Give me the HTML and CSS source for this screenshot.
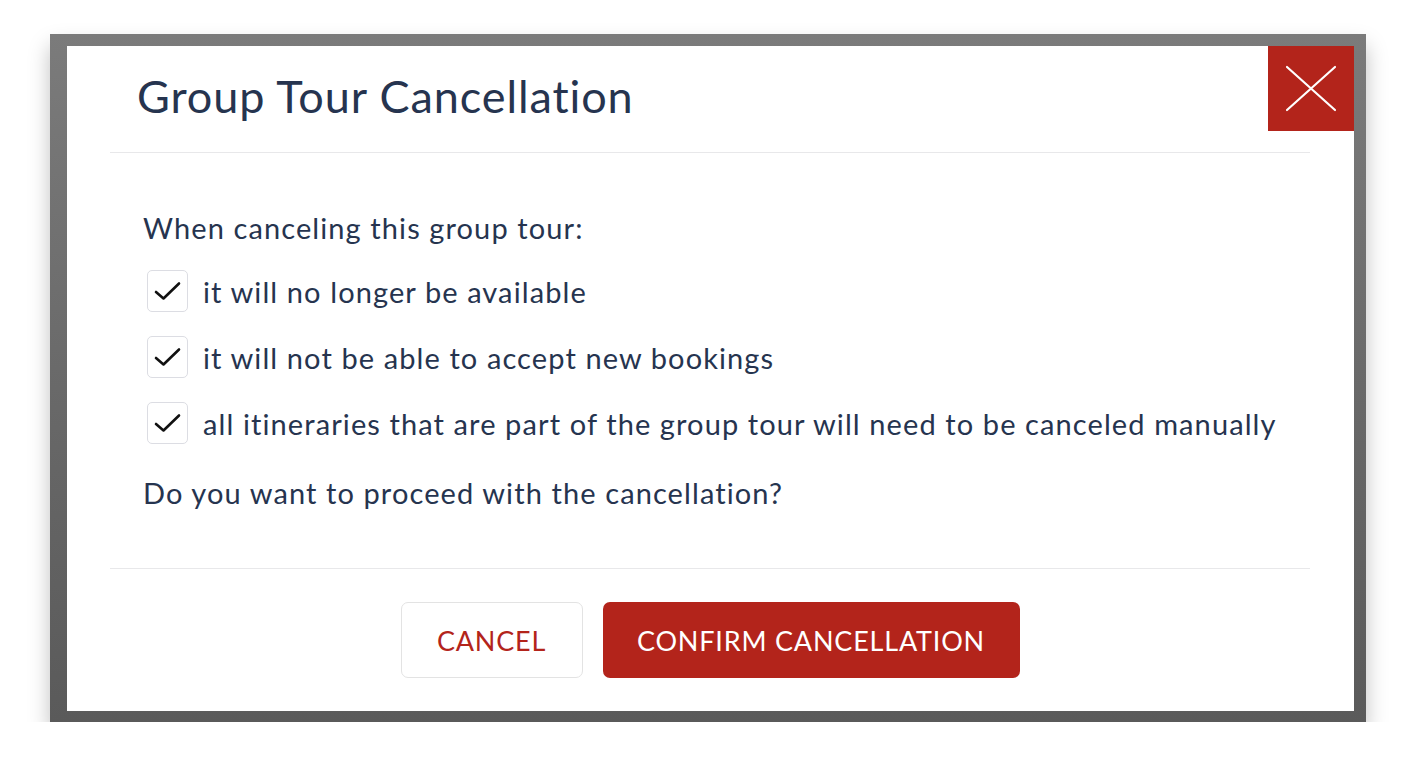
FILE: index.html
```html
<!DOCTYPE html>
<html lang="en">
<head>
    <meta charset="UTF-8">
    <meta name="viewport" content="width=device-width, initial-scale=1.0">
    <title>Group Tour Cancellation</title>
    <link rel="stylesheet" href="styles.css">
</head>
<body>
    <div class="frame">
        <div class="modal">
            <div class="modal-header">
                <h1>Group Tour Cancellation</h1>
                <button class="close-btn" type="button" aria-label="Close">
                    <svg viewBox="0 0 86 85" width="86" height="85">
                        <path d="M19 21 L67 64 M67 21 L19 64" stroke="#fff" stroke-width="2.2" stroke-linecap="round" fill="none"/>
                    </svg>
                </button>
            </div>
            <div class="modal-body">
                <p class="intro">When canceling this group tour:</p>
                <ul class="checklist">
                    <li>
                        <span class="check">
                            <svg viewBox="0 0 42 42" width="42" height="42"><path d="M9 22 L16.5 28.5 L32 13.5" stroke="#111" stroke-width="2.6" fill="none" stroke-linecap="round" stroke-linejoin="round"/></svg>
                        </span>
                        it will no longer be available
                    </li>
                    <li>
                        <span class="check">
                            <svg viewBox="0 0 42 42" width="42" height="42"><path d="M9 22 L16.5 28.5 L32 13.5" stroke="#111" stroke-width="2.6" fill="none" stroke-linecap="round" stroke-linejoin="round"/></svg>
                        </span>
                        it will not be able to accept new bookings
                    </li>
                    <li>
                        <span class="check">
                            <svg viewBox="0 0 42 42" width="42" height="42"><path d="M9 22 L16.5 28.5 L32 13.5" stroke="#111" stroke-width="2.6" fill="none" stroke-linecap="round" stroke-linejoin="round"/></svg>
                        </span>
                        all itineraries that are part of the group tour will need to be canceled manually
                    </li>
                </ul>
                <p class="outro">Do you want to proceed with the cancellation?</p>
            </div>
            <div class="modal-footer">
                <button type="button" class="btn btn-cancel">CANCEL</button>
                <button type="button" class="btn btn-confirm">CONFIRM CANCELLATION</button>
            </div>
        </div>
    </div>
</body>
</html>
```

FILE: styles.css
```css
:root {
    --font-body: 'Lato', 'Open Sans', sans-serif;
    --color-text: #26344f;
    --color-red: #b3241b;
    --color-line: #e8e8ea;
}

html, body {
    margin: 0;
    background: #fff;
}

body {
    font-family: var(--font-body);
    font-variant-ligatures: none;
    color: var(--color-text);
    padding: 34px 0 0 50px;
}

/* grey window frame around the dialog */
.frame {
    width: 1316px;
    box-sizing: border-box;
    padding: 12px 12px 11px 17px;
    background: linear-gradient(180deg, #7b7b7b 0%, #666 60%, #5a5a5a 100%);
    box-shadow: 0 12px 20px rgba(0, 0, 0, 0.25);
}

.modal {
    background: #fff;
    display: flex;
    flex-direction: column;
}

.modal-header {
    display: flex;
    justify-content: space-between;
    align-items: flex-start;
    height: 106px;
    margin: 0 44px 0 43px;
    border-bottom: 1px solid var(--color-line);
}
h1 {
    margin: 0;
    padding: 23px 0 0 27px;
    font-size: 45px;
    font-weight: 400;
    letter-spacing: 0.9px;
    line-height: 54px;
}
.close-btn {
    width: 86px;
    height: 85px;
    margin-right: -44px;
    padding: 0;
    border: none;
    background: var(--color-red);
    cursor: pointer;
}
.close-btn svg { display: block; }

.modal-body {
    padding: 55px 0 55px 76px;
    font-size: 29px;
    letter-spacing: 1.1px;
}
p {
    margin: 0;
    line-height: 40px;
}
.checklist {
    list-style: none;
    margin: 22px 0 29px;
    padding: 0;
    display: flex;
    flex-direction: column;
    gap: 24px;
}
.checklist li {
    display: flex;
    align-items: center;
    gap: 15px;
    height: 42px;
    margin-left: 4px;
}
.check {
    width: 41px;
    height: 42px;
    box-sizing: border-box;
    border: 1.5px solid #dcdde3;
    border-radius: 5px;
    display: flex;
    align-items: center;
    justify-content: center;
    flex-shrink: 0;
}
.check svg { display: block; margin: -1.5px; }

.modal-footer {
    margin: 0 44px 0 43px;
    border-top: 1px solid var(--color-line);
    padding: 33px 0 33px;
    display: flex;
    justify-content: center;
    gap: 20px;
}
.btn {
    height: 76px;
    border-radius: 7px;
    font-family: var(--font-body);
    font-size: 27px;
    letter-spacing: 0.8px;
    cursor: pointer;
}
.btn-cancel {
    width: 182px;
    background: #fff;
    color: var(--color-red);
    border: 1.5px solid #e3e3e3;
}
.btn-confirm {
    width: 417px;
    background: var(--color-red);
    color: #fff;
    border: none;
}
```
